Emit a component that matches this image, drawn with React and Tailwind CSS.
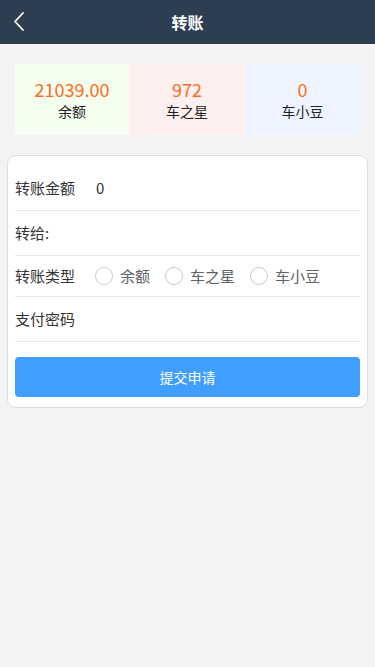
import React from "react";

function Radio({ label }) {
  return (
    <div className="flex items-center">
      <span className="w-[18px] h-[18px] rounded-full border border-[#c8c8c8] bg-white shrink-0"></span>
      <span className="ml-[7px] text-[15px] text-[#606266]">{label}</span>
    </div>
  );
}

export default function App() {
  const font = { fontFamily: '"Noto Sans CJK SC", "Noto Sans", sans-serif' };
  return (
    <div className="min-h-[667px] bg-[#f3f3f3]" style={font}>
      <div className="h-[44px] bg-[#2d3e50] flex items-center relative">
        <svg className="absolute left-[12px] top-[11px]" width="14" height="21" viewBox="0 0 14 21" fill="none">
          <path d="M11 2 L3 10.5 L11 19" stroke="#fff" strokeWidth="1.8" strokeLinecap="round" strokeLinejoin="round" />
        </svg>
        <div className="flex-1 text-center text-white text-[16px] font-bold leading-none">转账</div>
      </div>

      <div className="pt-[20px] px-[15px] flex">
        <div className="w-[114px] h-[71px] bg-[#f4fff0] flex flex-col items-center justify-center">
          <div className="text-[18px] text-[#ff6a1a] leading-[22px]">21039.00</div>
          <div className="text-[14px] text-[#222] leading-[20px] mt-[1px]">余额</div>
        </div>
        <div className="w-[116px] h-[71px] bg-[#fff0f0] flex flex-col items-center justify-center">
          <div className="text-[18px] text-[#ff6a1a] leading-[22px]">972</div>
          <div className="text-[14px] text-[#222] leading-[20px] mt-[1px]">车之星</div>
        </div>
        <div className="flex-1 h-[71px] bg-[#edf4ff] flex flex-col items-center justify-center">
          <div className="text-[18px] text-[#ff6a1a] leading-[22px]">0</div>
          <div className="text-[14px] text-[#222] leading-[20px] mt-[1px]">车小豆</div>
        </div>
      </div>

      <div className="mx-[7px] mt-[20px] bg-white border border-[#dedede] rounded-[9px] px-[7px] pt-[10px] pb-[10px]">
        <div className="h-[45px] flex items-center border-b border-[#e6e6e6] text-[15px] text-[#333]">
          <span className="w-[81px]">转账金额</span>
          <span className="text-[#333]">0</span>
        </div>
        <div className="h-[45px] flex items-center border-b border-[#e6e6e6] text-[15px] text-[#333]">
          <span>转给:</span>
        </div>
        <div className="h-[41px] flex items-center border-b border-[#e6e6e6] text-[15px] text-[#333]">
          <span className="w-[80px]">转账类型</span>
          <div className="flex items-center gap-[15px]">
            <Radio label="余额" />
            <Radio label="车之星" />
            <Radio label="车小豆" />
          </div>
        </div>
        <div className="h-[45px] flex items-center border-b border-[#e6e6e6] text-[15px] text-[#333]">
          <span>支付密码</span>
        </div>
        <button className="mt-[15px] w-full h-[40px] bg-[#409eff] rounded-[4px] text-white text-[14px] flex items-center justify-center">
          提交申请
        </button>
      </div>
    </div>
  );
}
